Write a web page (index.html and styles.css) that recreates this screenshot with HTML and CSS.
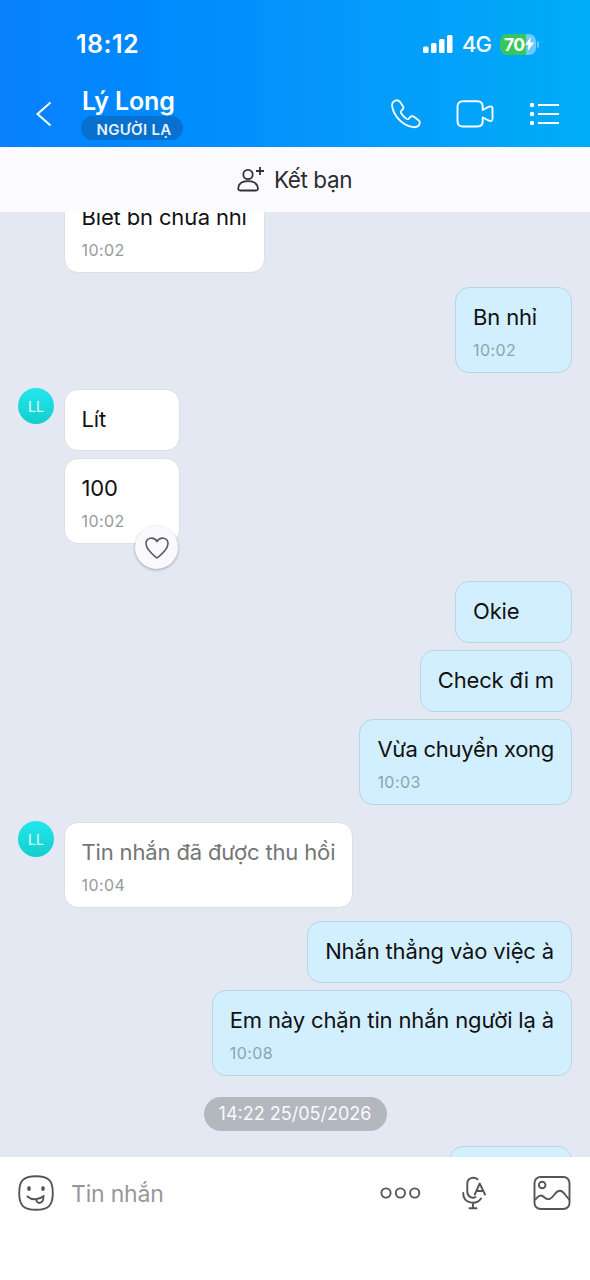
FILE: index.html
```html
<!DOCTYPE html>
<html lang="vi">
<head>
<meta charset="utf-8">
<title>Lý Long</title>
<link rel="stylesheet" href="styles.css">
</head>
<body>
<div class="app">
  <header class="header">
    <div class="status">
      <span class="clock">18:12</span>
      <div class="status-right">
        <svg class="signal" width="30" height="20" viewBox="0 0 30 20" fill="#fff"><rect x="0" y="12.500" width="5.500" height="6.500" rx="1.500"/><rect x="8" y="9" width="5.500" height="10" rx="1.500"/><rect x="16" y="5" width="5.500" height="14" rx="1.500"/><rect x="24" y="1" width="5.500" height="18" rx="1.500"/></svg>
        <span class="network">4G</span>
        <div class="battery"><span class="battery-text">70</span><svg width="9" height="14" viewBox="0 0 9 14" fill="#fff"><path d="M5.800 0 0 8H3.500L2.800 14 9 5.600H5.200Z"/></svg></div>
        <span class="battery-cap"></span>
      </div>
    </div>
    <div class="nav">
      <svg class="back" width="18" height="28" viewBox="0 0 18 28" fill="none" stroke="#fff" stroke-width="2"><path d="M15.500 2.500 2.500 14 15.500 25.500"/></svg>
      <div class="who">
        <div class="name">Lý Long</div>
        <div class="tag">NGƯỜI LẠ</div>
      </div>
      <div class="actions">
        <svg width="32" height="32" viewBox="0 0 32 32" fill="none" stroke="#fff" stroke-width="1.800" stroke-linejoin="round"><path d="M5.600 2.500C3 3.400 1.700 5.500 2.200 8.500 4 18.500 13 28 23.500 29.200 26.500 29.500 29 28 29.800 25.300 30 24 29.500 23 28.500 22.200L24 18.800C22.500 17.800 21.200 18 20.200 19L18.700 20.700C17.900 21.300 17 21.200 16.200 20.600 14 19 12.300 17.200 11 15 10.500 14.200 10.600 13.400 11.300 12.700L12.500 11.600C13.600 10.500 13.700 9.300 12.800 8L9.700 3.600C8.600 2.300 7.200 2 5.600 2.500Z"/></svg>
        <svg class="video" width="38" height="30" viewBox="0 0 38 30" fill="none" stroke="#fff" stroke-width="1.900" stroke-linejoin="round"><path d="M7 2.200H21.500Q26.700 2.200 26.700 8V11L33 7.700Q36.500 6.500 36.500 9.500V19.500Q36.500 22.800 33 21.700L26.700 18.500V22Q26.700 27.500 21.500 27.500H7Q1.500 27.500 1.500 22V8Q1.500 2.200 7 2.200Z"/></svg>
        <svg class="list" width="32" height="26" viewBox="0 0 32 26" fill="#fff"><circle cx="3" cy="4" r="2.200"/><circle cx="3" cy="13" r="2.200"/><circle cx="3" cy="22" r="2.200"/><path d="M9 3H30V5H9ZM9 12H30V14H9ZM9 21H30V23H9Z"/></svg>
      </div>
    </div>
  </header>

  <div class="friend-bar">
    <svg width="28" height="28" viewBox="0 0 28 28" fill="none" stroke="#333" stroke-width="1.800" stroke-linejoin="round"><circle cx="11" cy="8.500" r="4.700"/><path d="M1.300 22.500C1.500 17.500 5.500 15.200 11 15.200S20.500 17.500 20.900 22.500Q21 24.500 19 24.500H3.200Q1.200 24.500 1.300 22.500ZM23 1V9M19 5H27"/></svg>
    <span class="friend-text">Kết bạn</span>
  </div>

  <main class="chat">
    <div class="row first"><div class="bubble"><p>Biết bn chưa nhỉ</p><time>10:02</time></div></div>
    <div class="row mine g14"><div class="bubble"><p>Bn nhỉ</p><time>10:02</time></div></div>
    <div class="row g16"><div class="avatar">LL</div><div class="bubble"><p>Lít</p></div></div>
    <div class="row g7"><div class="bubble"><p>100</p><time>10:02</time>
      <div class="like"><svg width="26" height="24" viewBox="0 0 26 24" fill="none" stroke="#5c5d60" stroke-width="1.600" stroke-linejoin="round"><path d="M13 22C10 19.500 2 14 2 7.500 2 1.300 10 .3 13 5.500 16 .3 24 1.300 24 7.500 24 14 16 19.500 13 22Z"/></svg></div>
    </div></div>
    <div class="row mine g37"><div class="bubble"><p>Okie</p></div></div>
    <div class="row mine g7"><div class="bubble"><p>Check đi m</p></div></div>
    <div class="row mine g7"><div class="bubble"><p class="tight">Vừa chuyển xong</p><time>10:03</time></div></div>
    <div class="row g17"><div class="avatar">LL</div><div class="bubble"><p class="recalled">Tin nhắn đã được thu hồi</p><time>10:04</time></div></div>
    <div class="row mine g13"><div class="bubble"><p>Nhắn thẳng vào việc à</p></div></div>
    <div class="row mine g7"><div class="bubble"><p>Em này chặn tin nhắn người lạ à</p><time>10:08</time></div></div>
    <div class="date">14:22 25/05/2026</div>
    <div class="row mine g15"><div class="bubble next"></div></div>
  </main>

  <footer class="composer">
    <svg width="36" height="36" viewBox="0 0 36 36" fill="none" stroke="#555" stroke-width="1.900" stroke-linecap="round"><path d="M18 1.200C30.500 1.200 34.800 5.500 34.800 18S30.500 34.800 18 34.800 1.200 30.500 1.200 18 5.500 1.200 18 1.200Z"/><ellipse cx="11" cy="13.500" rx="1.800" ry="2.600" fill="#555" stroke="none"/><ellipse cx="25" cy="13.500" rx="1.800" ry="2.600" fill="#555" stroke="none"/><path d="M9.500 21.500C14 25.500 21 25 25.800 21M18.300 24.500C18.500 29.800 26 29 25.300 21.600"/></svg>
    <span class="placeholder">Tin nhắn</span>
    <svg class="more" width="42" height="12" viewBox="0 0 42 12" fill="none" stroke="#555" stroke-width="1.900"><circle cx="6" cy="6" r="4.600"/><circle cx="20.400" cy="6" r="4.600"/><circle cx="34.700" cy="6" r="4.600"/></svg>
    <svg class="mic" width="26" height="34" viewBox="0 0 26 34" fill="none" stroke="#555" stroke-width="1.900" stroke-linecap="round" stroke-linejoin="round"><path d="M15.500 3.300C12 .2 5.300 2 5.300 7.500V15.500C5.300 20.500 10 23 13.500 21M1.200 17C1.200 28 14.500 29.300 19 22.500M11 26.500V32M7.500 32.200H14.500M12.800 18.500 17.700 7.500 23 18.500M14.500 15H21.300"/></svg>
    <svg class="photo" width="38" height="34" viewBox="0 0 38 34" fill="none" stroke="#555" stroke-width="1.900" stroke-linejoin="round"><rect x="1.500" y="1" width="35" height="32" rx="6"/><circle cx="9.200" cy="9" r="3.300"/><path d="M2 24C6 18.500 8.500 18.500 11.500 21.500 15.500 25 18.500 22.500 21.500 18.500 25.500 13 29 14 32 18.500L36.500 24"/></svg>
  </footer>
</div>
</body>
</html>
```
FILE: styles.css
```css
* { box-sizing: border-box; }
body { margin: 0; font-family: Inter, "Noto Sans", sans-serif; }
p { margin: 0; }
svg { display: block; flex: none; }

.app { width: 590px; height: 1280px; display: flex; flex-direction: column; background: #fff; overflow: hidden; }

.header { height: 147px; flex: none; color: #fff; background: linear-gradient(90deg, #0a80ff 0%, #0088fd 22%, #0497fc 55%, #00adf7 100%); }
.status { display: flex; align-items: center; justify-content: space-between; height: 88px; padding: 0 51px 0 76px; }
.clock { font-size: 25px; font-weight: 600; letter-spacing: 0.45px; }
.status-right { display: flex; align-items: center; }
.network { font-size: 22px; font-weight: 500; margin-left: 9px; width: 29px; letter-spacing: -0.9px; }
.battery { display: flex; align-items: center; width: 36px; height: 21px; padding-left: 4px; margin-left: 9px; border-radius: 7px; background: linear-gradient(90deg, #34c85a 72%, #6ccbfb 72%); }
.battery-text { font-size: 17.5px; font-weight: 700; letter-spacing: -0.6px; }
.battery-cap { width: 2px; height: 7px; margin-left: 1px; border-radius: 0 2px 2px 0; background: #5fc8fb; }

.nav { display: flex; height: 59px; padding: 0 27px 0 35px; }
.back { margin-top: 12px; }
.who { margin-left: 28px; width: 230px; }
.name { font-size: 25px; font-weight: 600; line-height: 26px; margin-left: 1px; padding-bottom: 2px; letter-spacing: -0.15px; }
.tag { width: 102px; height: 24px; border-radius: 12px; background: #0870cf; font-size: 15px; font-weight: 600; line-height: 27px; text-align: center; letter-spacing: 0.3px; color: #e4f3ff; padding-left: 4px; }
.actions { display: flex; flex: 1; padding-top: 10px; margin-left: 79px; }
.video { margin: 1px 0 0 34px; }
.list { margin: 3px 0 0 35px; }

.friend-bar { height: 65px; flex: none; display: flex; align-items: center; justify-content: center; padding-right: 1px; background: #fafaff; color: #2c2c2e; }
.friend-text { font-size: 22.5px; margin-left: 9px; letter-spacing: -0.4px; }

.chat { height: 945px; flex: none; overflow: hidden; background: #e3e8f2; }
.row { display: flex; padding: 0 18px 0 64px; }
.row.first { margin-top: -25px; }
.mine { justify-content: flex-end; }
.g7 { padding-top: 7px; }
.g13 { padding-top: 13px; }
.g14 { padding-top: 14px; }
.g15 { padding-top: 15px; }
.g16 { padding-top: 16px; }
.g17 { padding-top: 17px; }
.g37 { padding-top: 37px; }
.avatar { width: 36px; height: 36px; margin: -1px 10px 0 -46px; border-radius: 50%; background: linear-gradient(#24e6ec, #12cfcc); color: #d5fbfb; font-size: 14px; font-weight: 500; line-height: 37px; text-align: center; }
.bubble { position: relative; min-width: 116px; min-height: 62px; padding: 15px 17px 12px 16.5px; border: 1px solid #dcdfe3; border-radius: 14px; background: #fff; font-size: 22px; line-height: 29px; letter-spacing: -0.15px; color: #111; white-space: nowrap; }
.first .bubble { min-width: 201px; }
.mine .bubble { min-width: 117px; padding-left: 17px; background: #d1effe; border-color: #b9d5e0; }
.bubble time { display: block; margin-top: 8px; font-size: 16px; line-height: 20px; letter-spacing: 0.45px; color: #98999c; }
.mine time { color: #8fa3ae; }
.bubble .tight { letter-spacing: -0.3px; }
.bubble .recalled { color: #747577; }
.like { position: absolute; right: 1px; bottom: -26px; width: 43px; height: 43px; border-radius: 50%; background: #f9f9fe; box-shadow: 0 1px 3px rgba(0, 0, 0, .3); display: flex; align-items: center; justify-content: center; }
.date { width: 183px; height: 34px; margin: 21px auto 0; border-radius: 17px; background: #b3b7be; color: #fafafa; font-size: 18px; line-height: 34px; text-align: center; }
.mine .next { width: 123px; }

.composer { height: 123px; display: flex; align-items: flex-start; padding: 18px 0 0 18px; background: #fff; }
.placeholder { width: 326px; padding-left: 17px; font-size: 23px; line-height: 38px; color: #95989b; letter-spacing: -0.2px; }
.more { margin-top: 12px; }
.mic { margin: 1px 0 0 40px; }
.photo { margin: 1px 0 0 45px; }
```
